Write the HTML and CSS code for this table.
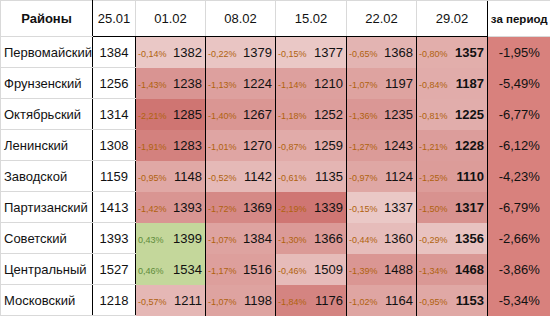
FILE: index.html
```html
<!DOCTYPE html>
<html lang="ru">

<head>
    <meta charset="UTF-8">
    <title>Районы</title>
    <link rel="stylesheet" href="styles.css">
</head>

<body>
    <table class="stat_tbl">
        <colgroup>
            <col class="c_name">
            <col class="c_base">
            <col class="c_week">
            <col class="c_week">
            <col class="c_week c_wide">
            <col class="c_week">
            <col class="c_week c_wide">
            <col class="c_total">
        </colgroup>
        <thead>
            <tr>
                <th class="th_name">Районы</th>
                <th class="th_date th_base">25.01</th>
                <th class="th_date">01.02</th>
                <th class="th_date">08.02</th>
                <th class="th_date">15.02</th>
                <th class="th_date">22.02</th>
                <th class="th_date">29.02</th>
                <th class="th_total">за период</th>
            </tr>
        </thead>
        <tbody id="statBody"></tbody>
    </table>
    <script>
    // район, 25.01, потом [процент, значение] по неделям, итог
    var rows = [
        ['Первомайский', 1384, [[-0.14, 1382], [-0.22, 1379], [-0.15, 1377], [-0.65, 1368], [-0.80, 1357]], -1.95],
        ['Фрунзенский', 1256, [[-1.43, 1238], [-1.13, 1224], [-1.14, 1210], [-1.07, 1197], [-0.84, 1187]], -5.49],
        ['Октябрьский', 1314, [[-2.21, 1285], [-1.40, 1267], [-1.18, 1252], [-1.36, 1235], [-0.81, 1225]], -6.77],
        ['Ленинский', 1308, [[-1.91, 1283], [-1.01, 1270], [-0.87, 1259], [-1.27, 1243], [-1.21, 1228]], -6.12],
        ['Заводской', 1159, [[-0.95, 1148], [-0.52, 1142], [-0.61, 1135], [-0.97, 1124], [-1.25, 1110]], -4.23],
        ['Партизанский', 1413, [[-1.42, 1393], [-1.72, 1369], [-2.19, 1339], [-0.15, 1337], [-1.50, 1317]], -6.79],
        ['Советский', 1393, [[0.43, 1399], [-1.07, 1384], [-1.30, 1366], [-0.44, 1360], [-0.29, 1356]], -2.66],
        ['Центральный', 1527, [[0.46, 1534], [-1.17, 1516], [-0.46, 1509], [-1.39, 1488], [-1.34, 1468]], -3.86],
        ['Московский', 1218, [[-0.57, 1211], [-1.07, 1198], [-1.84, 1176], [-1.02, 1164], [-0.95, 1153]], -5.34]
    ];

    var fmt = function (p) {
        return p.toFixed(2).replace('.', ',') + '%';
    };

    // светлый -> тёмный красный по модулю процента
    var heat = function (p) {
        if (p > 0) {
            return '#c4d79b';
        }
        var lo = [236, 206, 204],
            hi = [207, 117, 114],
            t = Math.min(-p / 2.21, 1),
            c = [];
        for (var i = 0; i < 3; i++) {
            c.push(Math.round(lo[i] + (hi[i] - lo[i]) * t));
        }
        return 'rgb(' + c.join(',') + ')';
    };

    var html = '';
    for (var r = 0; r < rows.length; r++) {
        var row = rows[r];
        html += '<tr>';
        html += '<td class="td_name">' + row[0] + '</td>';
        html += '<td class="td_base">' + row[1] + '</td>';
        for (var w = 0; w < row[2].length; w++) {
            var p = row[2][w][0],
                cls = 'td_week' + (w === row[2].length - 1 ? ' td_last' : '');
            html += '<td class="' + cls + '" style="background-color:' + heat(p) + '">' +
                '<div class="cell_in">' +
                '<span class="pct' + (p > 0 ? ' pct_up' : '') + '">' + fmt(p) + '</span>' +
                '<span class="num">' + row[2][w][1] + '</span>' +
                '</div></td>';
        }
        html += '<td class="td_total">' + fmt(row[3]) + '</td>';
        html += '</tr>';
    }
    document.getElementById('statBody').innerHTML = html;
    </script>
</body>

</html>
```

FILE: styles.css
```css
html,
body {
    margin: 0;
    background: #fff;
}

.stat_tbl {
    width: 550px;
    table-layout: fixed;
    border-collapse: collapse;
    font-family: "Liberation Sans", Arial, sans-serif;
    font-size: 13px;
    color: #111;
}

.c_name {
    width: 92px;
}

.c_base {
    width: 43px;
}

.c_week {
    width: 70px;
}

.c_wide {
    width: 71px;
}

.c_total {
    width: 63px;
}

.stat_tbl th,
.stat_tbl td {
    padding: 0;
    white-space: nowrap;
    overflow: hidden;
}

.stat_tbl thead tr {
    height: 36px;
}

.stat_tbl tbody tr {
    height: 31px;
}

.stat_tbl th {
    font-weight: normal;
    text-align: center;
    border-top: 1px solid #d9d9d9;
    border-left: 1px solid #d9d9d9;
    border-bottom: 1px solid #000;
}

.th_name {
    font-weight: bold !important;
    border-bottom-color: #d9d9d9 !important;
    border-right: 1px solid #000;
}

.th_total {
    font-weight: bold !important;
    font-size: 11.5px;
    border-left: 1px solid #000 !important;
    border-bottom-color: #d9d9d9 !important;
}

.td_name {
    padding-left: 3px !important;
    border-left: 1px solid #d9d9d9;
    border-bottom: 1px solid #d9d9d9;
    border-right: 1px solid #000;
}

.td_base {
    text-align: center;
    border-bottom: 1px solid #d9d9d9;
    border-right: 1px solid #000;
}

.td_week {
    border-right: 1px solid #000;
}

.cell_in {
    display: flex;
    align-items: baseline;
    justify-content: space-between;
    padding: 0 3px 0 2px;
}

.pct {
    font-size: 9px;
    color: #b0620e;
}

.pct_up {
    color: #5e8b3a;
}

.td_last .num {
    font-weight: bold;
}

.td_total {
    text-align: center;
    font-size: 13px;
    background-color: #d8817d;
    border-left: 1px solid #000;
}
```
